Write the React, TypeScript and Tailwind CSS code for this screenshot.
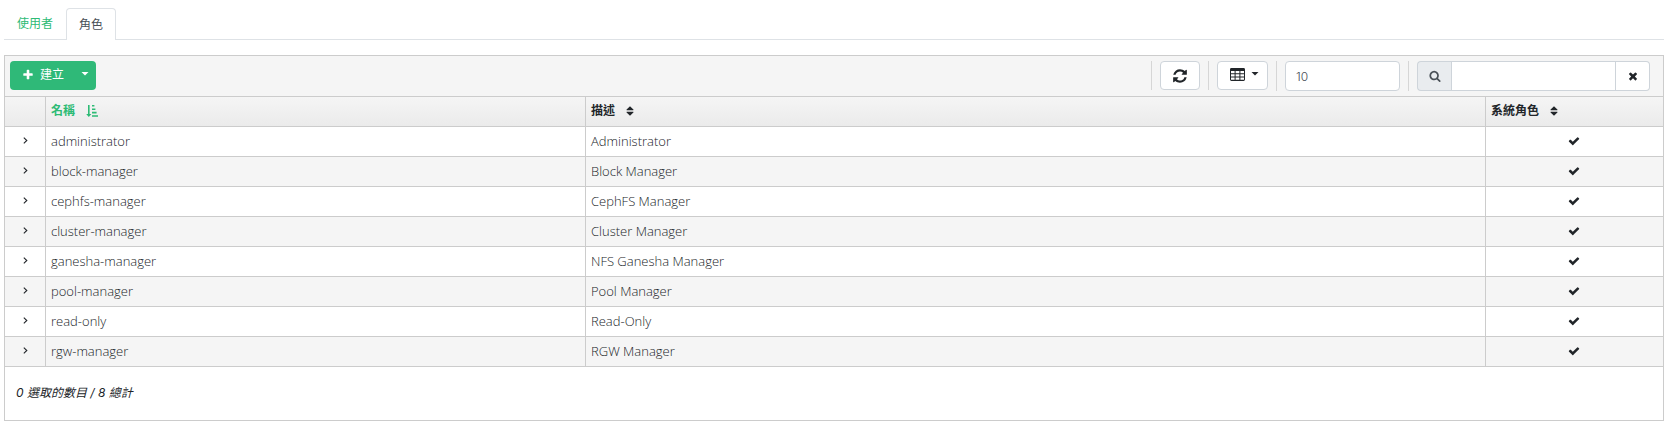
import React from 'react';

type IconProps = { d: string; className?: string };

function Glyph({ d, className = 'h-3 w-3' }: IconProps) {
  return (
    <svg viewBox="0 0 1792 1792" fill="currentColor" aria-hidden="true" className={className}>
      <path d={d} />
    </svg>
  );
}

const PLUS =
  'M1600 736v192q0 40-28 68t-68 28h-416v416q0 40-28 68t-68 28h-192q-40 0-68-28t-28-68v-416h-416q-40 0-68-28t-28-68v-192q0-40 28-68t68-28h416v-416q0-40 28-68t68-28h192q40 0 68 28t28 68v416h416q40 0 68 28t28 68z';
const CHECK =
  'M1671 566q0 40-28 68l-724 724-136 136q-28 28-68 28t-68-28l-136-136-362-362q-28-28-28-68t28-68l136-136q28-28 68-28t68 28l294 295 656-657q28-28 68-28t68 28l136 136q28 28 28 68z';
const TIMES =
  'M1490 1322q0 40-28 68l-136 136q-28 28-68 28t-68-28l-294-294-294 294q-28 28-68 28t-68-28l-136-136q-28-28-28-68t28-68l294-294-294-294q-28-28-28-68t28-68l136-136q28-28 68-28t68 28l294 294 294-294q28-28 68-28t68 28l136 136q28 28 28 68t-28 68l-294 294 294 294q28 28 28 68z';
const SEARCH =
  'M1216 832q0-185-131.5-316.5t-316.5-131.5-316.5 131.5-131.5 316.5 131.5 316.5 316.5 131.5 316.5-131.5 131.5-316.5zm512 832q0 52-38 90t-90 38q-54 0-90-38l-343-342q-179 124-399 124-143 0-273.5-55.5t-225-150-150-225-55.5-273.5 55.5-273.5 150-225 225-150 273.5-55.5 273.5 55.5 225 150 150 225 55.5 273.5q0 220-124 399l343 343q37 37 37 90z';
const REFRESH =
  'M1639 1056q0 5-1 7-64 268-268 434.5t-478 166.5q-146 0-282.5-55t-243.5-157l-129 129q-19 19-45 19t-45-19-19-45v-448q0-26 19-45t45-19h448q26 0 45 19t19 45-19 45l-137 137q71 66 161 102t187 36q134 0 250-65t186-179q11-17 53-117 8-23 30-23h192q13 0 22.5 9.5t9.5 22.5zm25-800v448q0 26-19 45t-45 19h-448q-26 0-45-19t-19-45 19-45l138-138q-148-137-349-137-134 0-250 65t-186 179q-11 17-53 117-8 23-30 23h-199q-13 0-22.5-9.5t-9.5-22.5v-7q65-268 270-434.5t480-166.5q146 0 284 55.5t245 156.5l130-129q19-19 45-19t45 19 19 45z';

function Caret() {
  return (
    <svg viewBox="0 0 8 4" fill="currentColor" aria-hidden="true" className="h-1 w-2">
      <path d="M.5 0h7L4 3.6z" />
    </svg>
  );
}

function SortIcon() {
  return (
    <svg viewBox="0 0 8 10" fill="currentColor" aria-hidden="true" className="h-2.5 w-2">
      <path d="M4 .2 7.4 3.6Q7.8 4.2 7.2 4.2H.8Q.2 4.2.6 3.6zM4 9.8.6 6.4Q.2 5.8.8 5.8H7.2Q7.8 5.8 7.4 6.4z" />
    </svg>
  );
}

function SortAscIcon() {
  return (
    <svg viewBox="0 0 12 12" fill="currentColor" aria-hidden="true" className="h-3 w-3">
      <path d="M2 0h1.6v9H5.4L2.8 12 .2 9H2zM6 0h2.4v1.6H6zM6 3.4h3.4V5H6zM6 6.8h4.6v1.6H6zM6 10.2h6v1.6H6z" />
    </svg>
  );
}

function TableIcon() {
  return (
    <svg viewBox="0 0 15 13" aria-hidden="true" className="h-[13px] w-[15px]">
      <path
        fill="currentColor"
        fillRule="evenodd"
        d="M1.4 0h12.2Q15 0 15 1.4v10.2q0 1.4-1.4 1.4H1.4Q0 13 0 11.6V1.4Q0 0 1.4 0zM1 3h3.6v2.2H1zM5.6 3h3.8v2.2H5.6zM10.4 3H14v2.2h-3.6zM1 6.2h3.6v2.2H1zM5.6 6.2h3.8v2.2H5.6zM10.4 6.2H14v2.2h-3.6zM1 9.4h3.6v2.4H1zM5.6 9.4h3.8v2.4H5.6zM10.4 9.4H14v2.4h-3.6z"
      />
    </svg>
  );
}

function AngleRight() {
  return (
    <svg viewBox="0 0 5 7" fill="none" stroke="currentColor" strokeWidth="1.1" aria-hidden="true" className="h-[7px] w-[5px]">
      <path d="M.8.6 3.8 3.5.8 6.4" />
    </svg>
  );
}

const roles = [
  { name: 'administrator', description: 'Administrator' },
  { name: 'block-manager', description: 'Block Manager' },
  { name: 'cephfs-manager', description: 'CephFS Manager' },
  { name: 'cluster-manager', description: 'Cluster Manager' },
  { name: 'ganesha-manager', description: 'NFS Ganesha Manager' },
  { name: 'pool-manager', description: 'Pool Manager' },
  { name: 'read-only', description: 'Read-Only' },
  { name: 'rgw-manager', description: 'RGW Manager' },
];

const headCell =
  'h-[30px] border-b border-r border-[#cccccc] bg-linear-to-b from-[#f5f5f5] to-[#ebebeb] px-[5px] pt-0 pb-0.5 text-left font-bold last:border-r-0';
const bodyCell = 'h-[30px] border-b border-r border-[#cccccc] px-[5px] pt-0 pb-0.5 last:border-r-0';

export default function App() {
  return (
    <main className="px-1 pt-2 font-['Inter','Noto_Sans_CJK_TC',sans-serif] text-xs text-[#212529]">
      <nav className="flex h-8 items-stretch border-b border-[#dee2e6]">
        <a href="#users" className="flex items-center px-[13px] text-[#2dbb75]">
          使用者
        </a>
        <a
          href="#roles"
          aria-current="page"
          className="-mb-px flex items-center rounded-t border border-b-0 border-[#dee2e6] bg-white px-3 text-[#495057]"
        >
          角色
        </a>
      </nav>

      <section className="mt-[15px] border border-[#cccccc]">
        <div className="flex h-[41px] items-start justify-between border-b border-[#cccccc] bg-[#f5f5f5] pl-[5px] pr-[13px] pt-[5px]">
          <div className="flex h-[29px] rounded bg-[#2fb978] text-white">
            <button type="button" className="flex items-center gap-1.5 pl-3 pr-2 pb-0.5">
              <Glyph d={PLUS} />
              建立
            </button>
            <button type="button" aria-label="更多" className="flex items-center pl-[9px] pr-[7px] pb-1">
              <Caret />
            </button>
          </div>

          <div className="flex items-start">
            <div className="border-l border-[#d6d6d6] px-2">
              <button
                type="button"
                aria-label="重新整理"
                className="flex h-[29px] w-10 items-center justify-center rounded border border-[#ced4da] bg-white"
              >
                <Glyph d={REFRESH} className="h-4 w-4" />
              </button>
            </div>
            <div className="border-l border-[#d6d6d6] px-2">
              <button
                type="button"
                aria-label="欄位"
                className="flex h-[29px] w-[51px] items-center gap-1.5 rounded border border-[#ced4da] bg-white pb-0.5 pl-3"
              >
                <TableIcon />
                <span className="pb-0.5">
                  <Caret />
                </span>
              </button>
            </div>
            <div className="border-l border-[#d6d6d6] px-2">
              <input
                type="text"
                inputMode="numeric"
                aria-label="每頁筆數"
                defaultValue="10"
                className="block h-[30px] w-[115px] rounded border border-[#ced4da] bg-white px-2.5 font-light text-[#495057]"
              />
            </div>
            <div className="flex border-l border-[#d6d6d6] pl-2">
              <label
                htmlFor="search"
                aria-label="搜尋"
                className="flex h-[30px] w-[34px] items-center justify-center rounded-l border border-r-0 border-[#ced4da] bg-[#e9ecef] text-[#495057]"
              >
                <Glyph d={SEARCH} />
              </label>
              <input
                id="search"
                type="text"
                className="h-[30px] w-[165px] border border-[#ced4da] bg-white px-2"
              />
              <button
                type="button"
                aria-label="清除"
                className="flex h-[30px] w-[34px] items-center justify-center rounded-r border border-l-0 border-[#ced4da] bg-white"
              >
                <Glyph d={TIMES} />
              </button>
            </div>
          </div>
        </div>

        <table className="w-full table-fixed border-separate border-spacing-0">
          <colgroup>
            <col className="w-[41px]" />
            <col className="w-[32.57%]" />
            <col />
            <col className="w-[10.68%]" />
          </colgroup>
          <thead>
            <tr>
              <th className={headCell} aria-label="展開" />
              <th className={headCell} aria-sort="ascending">
                <button type="button" className="flex items-center gap-[11px] text-[#2dbb75]">
                  名稱
                  <SortAscIcon />
                </button>
              </th>
              <th className={headCell}>
                <button type="button" className="flex items-center gap-[11px]">
                  描述
                  <SortIcon />
                </button>
              </th>
              <th className={headCell}>
                <button type="button" className="flex items-center gap-[11px]">
                  系統角色
                  <SortIcon />
                </button>
              </th>
            </tr>
          </thead>
          <tbody className="font-['Open_Sans',sans-serif] text-[13px] leading-4 font-light">
            {roles.map((role) => (
              <tr key={role.name} className="even:bg-[#f5f5f5]">
                <td className={bodyCell}>
                  <button type="button" aria-label={role.name} className="mx-auto flex h-4 w-4 items-center justify-center">
                    <AngleRight />
                  </button>
                </td>
                <td className={bodyCell}>{role.name}</td>
                <td className={bodyCell}>{role.description}</td>
                <td className={bodyCell}>
                  <Glyph d={CHECK} className="mx-auto h-3 w-3" />
                </td>
              </tr>
            ))}
          </tbody>
        </table>

        <footer className="flex h-[53px] items-center px-[11px] pb-0.5 italic">
          0 選取的數目 / 8 總計
        </footer>
      </section>
    </main>
  );
}
